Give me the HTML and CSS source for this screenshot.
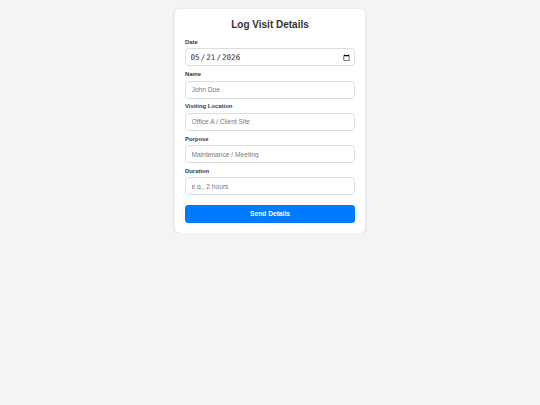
FILE: index.html
```html
<!DOCTYPE html>
<html lang="en">
<head>
<meta charset="utf-8">
<title>Log Visit Details</title>
<link rel="stylesheet" href="styles.css">
</head>
<body>
<main class="page">
  <form class="card">
    <h2 class="title">Log Visit Details</h2>
    <label class="label" for="date">Date</label>
    <input class="field date" id="date" type="date" value="2026-05-21">
    <label class="label" for="name">Name</label>
    <input class="field" id="name" type="text" placeholder="John Doe">
    <label class="label" for="loc">Visiting Location</label>
    <input class="field" id="loc" type="text" placeholder="Office A / Client Site">
    <label class="label" for="purpose">Purpose</label>
    <input class="field" id="purpose" type="text" placeholder="Maintenance / Meeting">
    <label class="label" for="dur">Duration</label>
    <input class="field" id="dur" type="text" placeholder="e.g., 2 hours">
    <button class="btn" type="button">Send Details</button>
  </form>
</main>
</body>
</html>
```
FILE: styles.css
```css
* { box-sizing: border-box; }
html, body { margin: 0; padding: 0; }
body {
  background: #f3f5f4;
  font-family: "Liberation Sans", Arial, sans-serif;
  color: #333;
}
.page {
  display: flex;
  justify-content: center;
  padding-top: 9px;
}
.card {
  width: 190px;
  background: #fff;
  border-radius: 5px;
  padding: 10px 10px 10.5px;
  box-shadow: 0 1px 4px rgba(0,0,0,0.12);
  display: flex;
  flex-direction: column;
}
.title {
  margin: 0 0 8.5px;
  font-size: 10px;
  font-weight: bold;
  text-align: center;
  color: #333;
  line-height: 11.5px;
}
.label {
  font-size: 5.9px;
  font-weight: bold;
  color: #3a3a3a;
  line-height: 6.7px;
  margin-bottom: 2.6px;
}
.field {
  height: 18px;
  width: 100%;
  border: 1px solid #ddd;
  border-radius: 3.3px;
  padding: 0 5.5px;
  font-family: "Liberation Sans", Arial, sans-serif;
  font-size: 6.65px;
  color: #333;
  margin: 0 0 4.95px;
  outline: none;
  background: #fff;
}
.field::placeholder { color: #7a7a7a; }
.date {
  font-family: "DejaVu Sans Mono", monospace;
  font-size: 7.6px;
  padding-left: 3.5px;
  padding-right: 4px;
}
.date::-webkit-calendar-picker-indicator {
  width: 7px;
  height: 7px;
  margin: 0;
  padding: 0;
}
.btn {
  margin-top: 5.05px;
  height: 17.5px;
  width: 100%;
  border: none;
  border-radius: 3.3px;
  background: #007bff;
  color: #fff;
  font-family: "Liberation Sans", Arial, sans-serif;
  font-size: 6.67px;
  font-weight: bold;
  padding: 0;
}
```
